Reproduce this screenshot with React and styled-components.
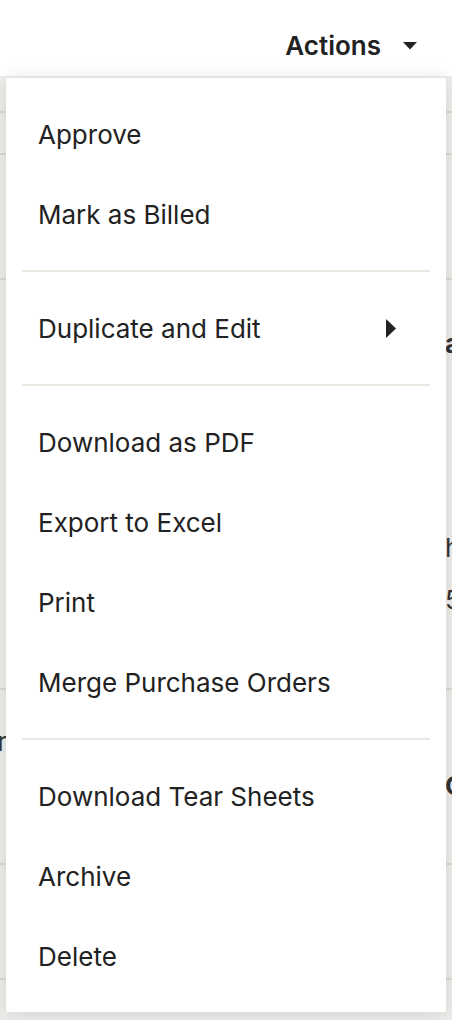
import React from "react";
import styled, { createGlobalStyle } from "styled-components";

const GlobalStyle = createGlobalStyle`
  html, body {
    margin: 0;
    padding: 0;
    background: #eeeeea;
  }
  body {
    font-family: "Inter", "Liberation Sans", sans-serif;
    color: #222;
  }
`;

const Page = styled.div`
  position: relative;
  width: 452px;
  height: 1020px;
  overflow: hidden;
  background: #eeeeea;
`;

const Header = styled.div`
  height: 76px;
  background: #fff;
  display: flex;
  justify-content: flex-end;
  align-items: flex-start;
  padding: 30px 35px 0 0;
  box-sizing: border-box;
`;

const ActionsButton = styled.button`
  border: 0;
  background: none;
  padding: 0;
  display: flex;
  align-items: center;
  gap: 22px;
  font-family: inherit;
  font-size: 26px;
  line-height: 32px;
  font-weight: 600;
  color: #222;
`;

const Rows = styled.div`
  display: flex;
  flex-direction: column;
`;

const Row = styled.div`
  height: ${(p) => p.h}px;
  border-bottom: 2px solid #dcdcd6;
  box-sizing: border-box;
  position: relative;
`;

// bits of the table behind the menu that show at its edges
const Peek = styled.span`
  position: absolute;
  top: ${(p) => p.top}px;
  ${(p) => (p.left ? "right: 445px;" : "left: 445px;")}
  font-size: 26px;
  font-weight: ${(p) => (p.bold ? 700 : 400)};
  color: #333;
  white-space: nowrap;
`;

const Menu = styled.div`
  position: absolute;
  top: 78px;
  left: 6px;
  width: 440px;
  padding: 16px 0;
  background: #fff;
  border-radius: 2px;
  box-shadow: 0 2px 20px rgba(0, 0, 0, 0.13);
  box-sizing: border-box;
`;

const Item = styled.div`
  height: 80px;
  display: flex;
  align-items: center;
  justify-content: space-between;
  padding: 0 50px 0 32px;
  font-size: 26px;
  color: #222;
`;

const Divider = styled.div`
  height: 2px;
  margin: 16px 16px;
  background: #e8e8e0;
`;

const Caret = ({ dir }) =>
  dir === "down" ? (
    <svg width="14" height="8" viewBox="0 0 14 8">
      <path d="M0 0h14L7 7.5z" fill="#222" />
    </svg>
  ) : (
    <svg width="10" height="19" viewBox="0 0 10 19">
      <path d="M0 0l10 9.5L0 19z" fill="#222" />
    </svg>
  );

const groups = [
  [{ label: "Approve" }, { label: "Mark as Billed" }],
  [{ label: "Duplicate and Edit", sub: true }],
  [
    { label: "Download as PDF" },
    { label: "Export to Excel" },
    { label: "Print" },
    { label: "Merge Purchase Orders" },
  ],
  [{ label: "Download Tear Sheets" }, { label: "Archive" }, { label: "Delete" }],
];

export default function App() {
  return (
    <Page>
      <GlobalStyle />
      <Header>
        <ActionsButton>
          Actions
          <Caret dir="down" />
        </ActionsButton>
      </Header>
      <Rows>
        <Row h={37} />
        <Row h={42} />
        <Row h={125} />
        <Row h={410}>
          <Peek top={48} bold>a</Peek>
          <Peek top={252}>h</Peek>
          <Peek top={304}>5</Peek>
        </Row>
        <Row h={175}>
          <Peek top={36} left>r</Peek>
          <Peek top={80} bold>C</Peek>
        </Row>
        <Row h={115} />
        <Row h={60} />
      </Rows>
      <Menu>
        {groups.map((g, gi) => (
          <React.Fragment key={gi}>
            {gi > 0 && <Divider />}
            {g.map((it) => (
              <Item key={it.label}>
                <span>{it.label}</span>
                {it.sub && <Caret dir="right" />}
              </Item>
            ))}
          </React.Fragment>
        ))}
      </Menu>
    </Page>
  );
}
